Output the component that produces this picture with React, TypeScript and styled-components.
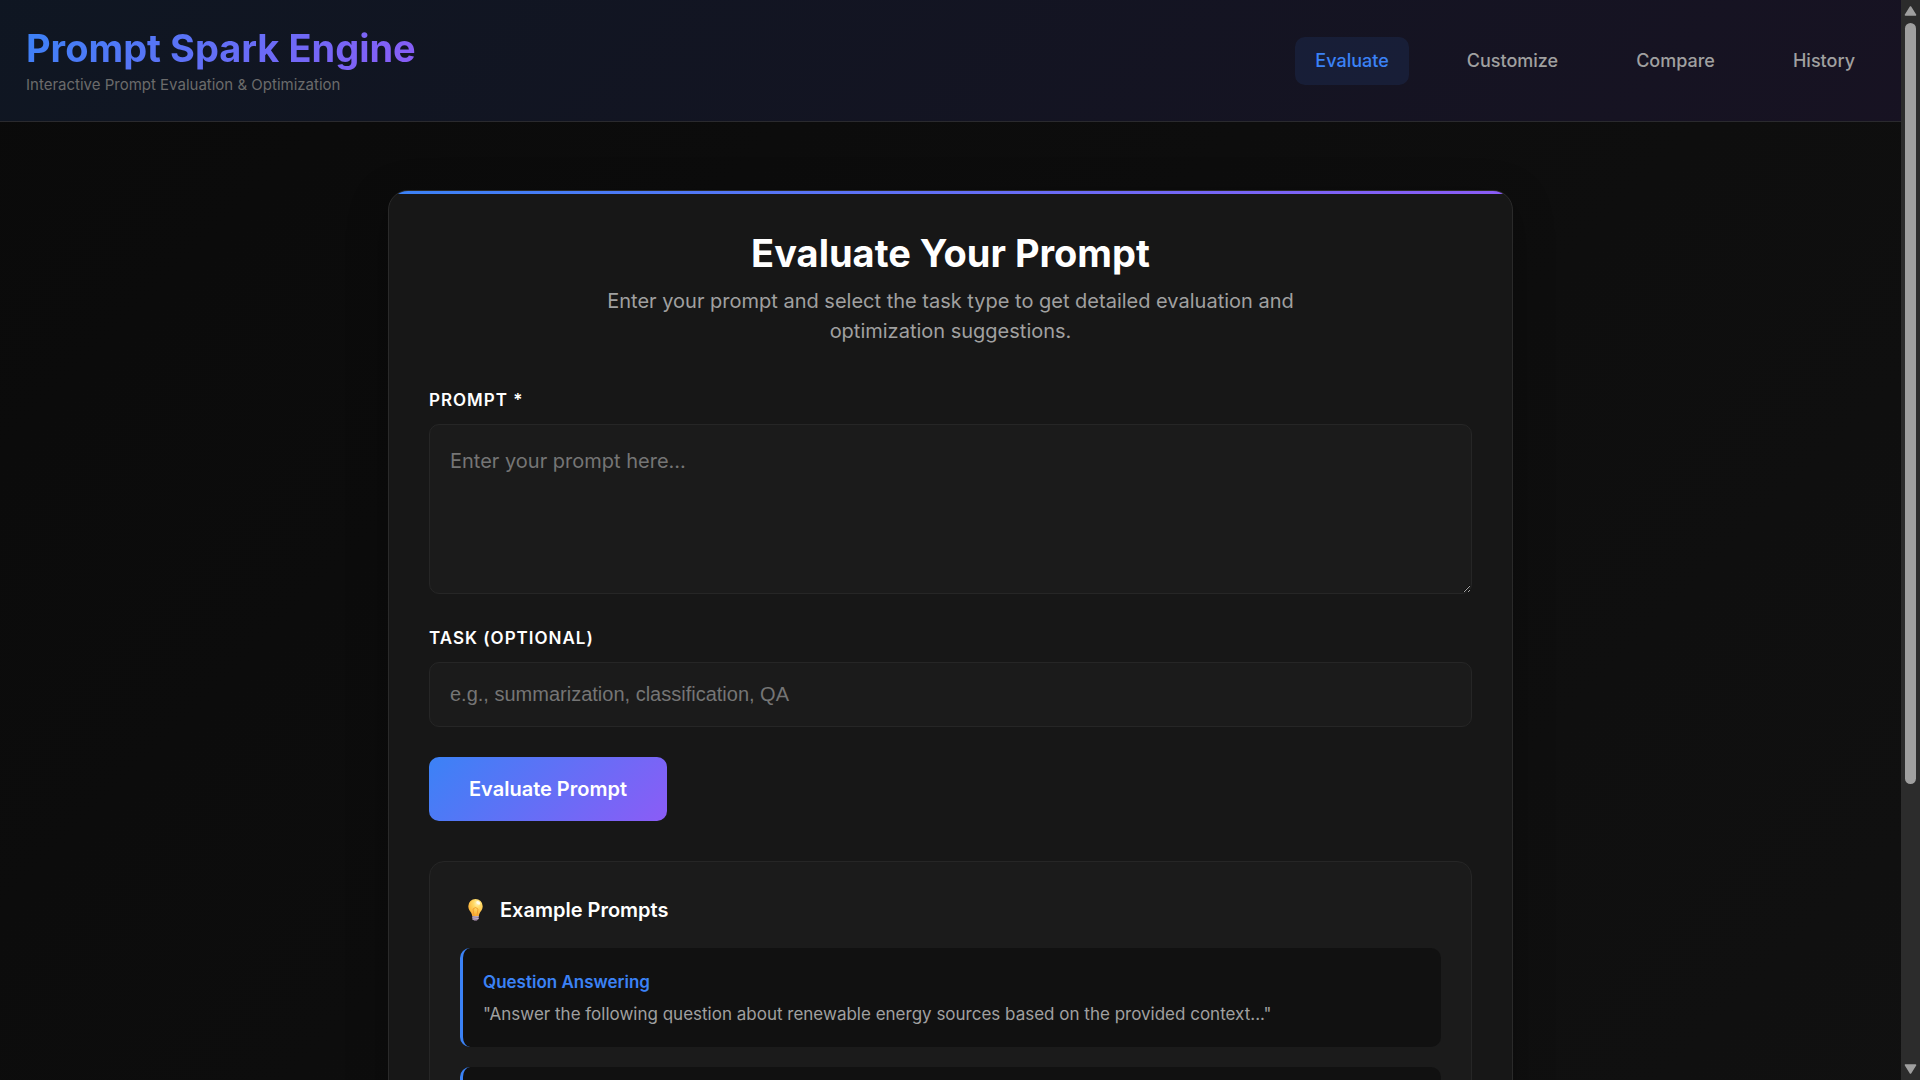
import React from "react";
import styled, { createGlobalStyle } from "styled-components";

const accent = "#3b82f6";
const violet = "#8b5cf6";

const GlobalStyle = createGlobalStyle`
  *, *::before, *::after { box-sizing: border-box; }
  html { scrollbar-width: none; }
  body {
    margin: 0;
    background: #0a0a0a;
    color: #ffffff;
    font-family: Inter, "Liberation Sans", sans-serif;
    font-size: 20px;
    line-height: 32px;
  }
  h1, h2, h3, h4, p { margin: 0; }
`;

const Shell = styled.div`
  display: grid;
  grid-template-columns: minmax(0, 1fr) 19px;
  min-height: 100vh;
`;

const Page = styled.div`
  background: linear-gradient(135deg, #0a0a0a 0%, #111111 100%);
`;

const Header = styled.header`
  display: flex;
  align-items: center;
  justify-content: space-between;
  padding: 24px 26px;
  border-bottom: 1px solid #2a2a2e;
  background: linear-gradient(135deg, rgba(59, 130, 246, 0.1), rgba(139, 92, 246, 0.1)) #0a0a0a;
`;

const Brand = styled.h1`
  width: fit-content;
  font-size: 38px;
  font-weight: 700;
  line-height: 49px;
  color: transparent;
  background: linear-gradient(135deg, ${accent}, ${violet});
  background-clip: text;
  -webkit-background-clip: text;
`;

const Tagline = styled.p`
  font-size: 15px;
  line-height: 24px;
  color: #6b6b6b;
`;

const Nav = styled.nav`
  display: flex;
  gap: 38px;
`;

const NavLink = styled.a<{ $active?: boolean }>`
  padding: 10px 20px;
  border-radius: 10px;
  font-size: 18px;
  font-weight: 500;
  line-height: 28px;
  text-decoration: none;
  color: ${(p) => (p.$active ? accent : "#a0a0a0")};
  background: ${(p) => (p.$active ? "rgba(59, 130, 246, 0.1)" : "transparent")};
`;

const Main = styled.main`
  padding: 68px 25px;
`;

const Card = styled.section`
  max-width: 1125px;
  margin: 0 auto;
  padding: 40px;
  position: relative;
  overflow: hidden;
  border: 1px solid #2a2a2a;
  border-radius: 20px;
  background: #171717;
  box-shadow: 0 10px 40px rgba(0, 0, 0, 0.3);

  &::before {
    content: "";
    position: absolute;
    inset: 0 0 auto;
    height: 3px;
    background: linear-gradient(135deg, ${accent}, ${violet});
  }
`;

const Intro = styled.div`
  display: grid;
  gap: 10px;
  justify-items: center;
  margin-bottom: 40px;
  text-align: center;
`;

const Heading = styled.h2`
  font-size: 38px;
  font-weight: 700;
  line-height: 45px;
`;

const Lead = styled.p`
  max-width: 750px;
  line-height: 30px;
  color: #a0a0a0;
`;

const Form = styled.form`
  display: grid;
  gap: 30px;
  justify-items: start;
`;

const Field = styled.div`
  display: grid;
  gap: 10px;
  width: 100%;
`;

const Label = styled.label`
  font-size: 17px;
  font-weight: 600;
  line-height: 28px;
  letter-spacing: 1px;
  text-transform: uppercase;
`;

const TextArea = styled.textarea`
  display: block;
  width: 100%;
  height: 170px;
  padding: 20px;
  border: 1px solid #262626;
  border-radius: 10px;
  background: #1b1b1b;
  color: #ffffff;
  font: 400 20px/32px Inter, "Liberation Sans", sans-serif;
  resize: vertical;
  &::placeholder { color: #757575; }
`;

const TextInput = styled.input`
  width: 100%;
  padding: 20px;
  border: 1px solid #262626;
  border-radius: 10px;
  background: #1b1b1b;
  color: #ffffff;
  font: 400 20px "Liberation Sans", sans-serif;
  &::placeholder { color: #757575; }
`;

const Submit = styled.button`
  padding: 20px 40px;
  border: 0;
  border-radius: 10px;
  background: linear-gradient(135deg, ${accent}, ${violet});
  color: #ffffff;
  font: 600 20px/24px Inter, "Liberation Sans", sans-serif;
  cursor: pointer;
`;

const Examples = styled.section`
  margin-top: 40px;
  padding: 30px;
  border: 1px solid #262626;
  border-radius: 15px;
  background: #1b1b1b;
`;

const ExamplesTitle = styled.h3`
  display: flex;
  align-items: center;
  gap: 10px;
  margin-bottom: 20px;
  font-size: 20px;
  font-weight: 600;
  line-height: 36px;
`;

const ExampleList = styled.div`
  display: grid;
  gap: 20px;
`;

const Example = styled.article`
  display: grid;
  gap: 5px;
  padding: 20px;
  border-left: 3px solid ${accent};
  border-radius: 10px;
  background: #111111;
`;

const ExampleName = styled.h4`
  font-size: 17px;
  font-weight: 600;
  line-height: 28px;
  color: ${accent};
`;

const ExampleText = styled.p`
  font-size: 17px;
  line-height: 26px;
  color: #a0a0a0;
`;

const Scrollbar = styled.div`
  position: sticky;
  top: 0;
  display: grid;
  grid-template-rows: 23px 1fr 23px;
  justify-items: center;
  height: 100vh;
  background: #2c2c2c;
`;

const Arrow = styled.svg<{ $down?: boolean }>`
  width: 13px;
  height: 11px;
  margin: 5px 0;
  align-self: ${(p) => (p.$down ? "end" : "start")};
  transform: ${(p) => (p.$down ? "rotate(180deg)" : "none")};
`;

const Thumb = styled.div`
  width: 11px;
  height: 73.6%;
  border-radius: 6px;
  background: #9f9f9f;
`;

const BulbIcon = () => (
  <svg width="30" height="24" viewBox="0 0 30 24" aria-hidden="true">
    <defs>
      <radialGradient id="glass" cx="0.62" cy="0.25" r="0.75">
        <stop offset="0" stopColor="#fff3b8" />
        <stop offset="0.35" stopColor="#ffda66" />
        <stop offset="1" stopColor="#f9ab32" />
      </radialGradient>
    </defs>
    <path
      d="M15.500 1a7.200 7.200 0 0 0-7.200 7.200c0 3 1.600 4.600 2.700 6.300.7 1.100 1 2.500 1.200 3.500h6.600c.2-1 .5-2.400 1.200-3.500 1.100-1.700 2.700-3.300 2.700-6.300A7.200 7.200 0 0 0 15.500 1z"
      fill="url(#glass)"
    />
    <path d="M14 17.500 13 11q2.500-3 5 0l-1 6.500" fill="none" stroke="#f0962a" strokeWidth="0.8" />
    <ellipse cx="18.300" cy="4.800" rx="2.200" ry="1.500" fill="#fffbe6" transform="rotate(35 18.3 4.8)" />
    <path d="M12.300 18h6.400v2.600q0 .8-.9 1.100l-1.100 1.100h-2.400l-1.100-1.100q-.9-.3-.9-1.100z" fill="#8b7691" />
    <path d="M12.300 19.200l6.400-.6M12.400 21.200l6.200-.7" stroke="#d9cbe0" strokeWidth="0.8" />
  </svg>
);

const ArrowIcon = ({ down }: { down?: boolean }) => (
  <Arrow $down={down} viewBox="0 0 13 11" aria-hidden="true">
    <path d="M6.500 2 11.500 10h-10z" fill="#9f9f9f" stroke="#9f9f9f" strokeWidth="1.600" strokeLinejoin="round" />
  </Arrow>
);

const links = ["Evaluate", "Customize", "Compare", "History"];

const examples = [
  {
    name: "Question Answering",
    text: '"Answer the following question about renewable energy sources based on the provided context..."',
  },
  {
    name: "Summarization",
    text: '"Summarize the following article in three concise sentences..."',
  },
];

export default function App() {
  return (
    <>
      <GlobalStyle />
      <Shell>
        <Page>
          <Header>
            <div>
              <Brand>Prompt Spark Engine</Brand>
              <Tagline>Interactive Prompt Evaluation &amp; Optimization</Tagline>
            </div>
            <Nav>
              {links.map((link, i) => (
                <NavLink key={link} href={`#${link.toLowerCase()}`} $active={i === 0}>
                  {link}
                </NavLink>
              ))}
            </Nav>
          </Header>
          <Main>
            <Card>
              <Intro>
                <Heading>Evaluate Your Prompt</Heading>
                <Lead>
                  Enter your prompt and select the task type to get detailed evaluation and optimization
                  suggestions.
                </Lead>
              </Intro>
              <Form onSubmit={(e) => e.preventDefault()}>
                <Field>
                  <Label htmlFor="prompt">Prompt *</Label>
                  <TextArea id="prompt" placeholder="Enter your prompt here..." required />
                </Field>
                <Field>
                  <Label htmlFor="task">Task (optional)</Label>
                  <TextInput id="task" type="text" placeholder="e.g., summarization, classification, QA" />
                </Field>
                <Submit type="submit">Evaluate Prompt</Submit>
              </Form>
              <Examples>
                <ExamplesTitle>
                  <BulbIcon />
                  Example Prompts
                </ExamplesTitle>
                <ExampleList>
                  {examples.map((example) => (
                    <Example key={example.name}>
                      <ExampleName>{example.name}</ExampleName>
                      <ExampleText>{example.text}</ExampleText>
                    </Example>
                  ))}
                </ExampleList>
              </Examples>
            </Card>
          </Main>
        </Page>
        <Scrollbar aria-hidden="true">
          <ArrowIcon />
          <Thumb />
          <ArrowIcon down />
        </Scrollbar>
      </Shell>
    </>
  );
}
